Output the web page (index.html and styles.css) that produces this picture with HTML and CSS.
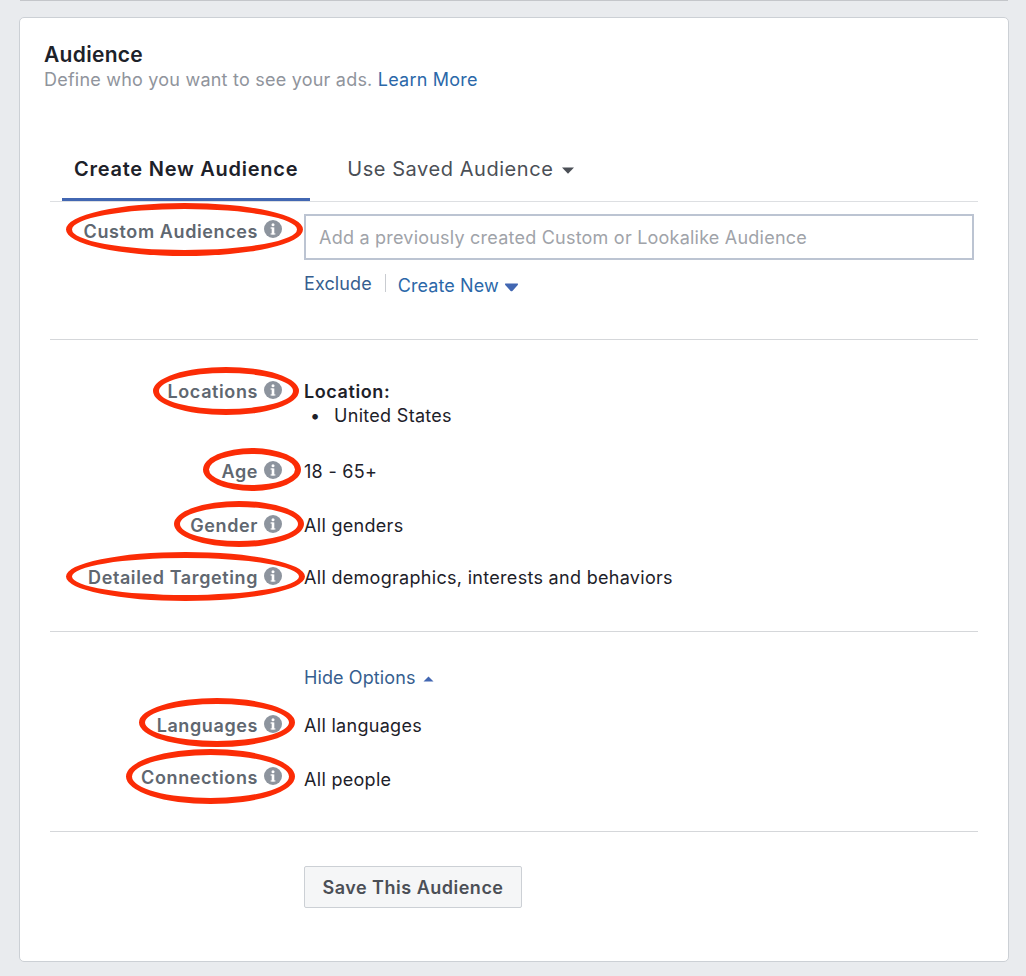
FILE: index.html
```html
<!DOCTYPE html>
<html lang="en">
<head>
<meta charset="utf-8">
<title>Audience</title>
<link rel="stylesheet" href="styles.css">
</head>
<body>
<svg class="defs" width="0" height="0" aria-hidden="true">
  <symbol id="info" viewBox="0 0 18 18">
    <circle cx="9" cy="9" r="9" fill="#8d949e"/>
    <circle cx="9" cy="4.8" r="1.5" fill="#fff"/>
    <rect x="7.7" y="7.4" width="2.6" height="7" fill="#fff"/>
    <rect x="6.6" y="7.4" width="2" height="1.2" fill="#fff"/>
    <rect x="6.6" y="13.4" width="4.8" height="1.1" fill="#fff"/>
  </symbol>
</svg>
<div class="prev-card"></div>
<main class="card">
  <h2 class="title">Audience</h2>
  <p class="subtitle">Define who you want to see your ads. <a class="link" href="#">Learn More</a></p>

  <div class="body">
    <nav class="tabs">
      <a class="tab tab-active" href="#">Create New Audience</a>
      <a class="tab" href="#">Use Saved Audience
        <svg class="caret-dark" width="12" height="7" viewBox="0 0 12 7"><path d="M0 .5h12L6 6.800z" fill="#4b4f56"/></svg>
      </a>
    </nav>

    <section class="section section-custom">
      <div class="row">
        <div class="label label-custom"><span class="ring ring-custom"></span>Custom Audiences <svg class="info"><use href="#info"/></svg></div>
        <div class="content">
          <div class="input">Add a previously created Custom or Lookalike Audience</div>
          <div class="actions">
            <a class="link-plain" href="#">Exclude</a>
            <span class="sep"></span>
            <a class="link create" href="#">Create New
              <svg width="15" height="9" viewBox="0 0 15 9"><path d="M1 1.2C1 .6 1.4.5 2 .5h11c.6 0 1 .1 1 .7 0 .5-.3.8-.7 1.200L8.400 7.900c-.5.5-1.300.5-1.800 0L1.700 2.400C1.300 2 1 1.700 1 1.200z" fill="#4267b2"/></svg>
            </a>
          </div>
        </div>
      </div>
    </section>

    <section class="section section-demo">
      <div class="row row-loc">
        <div class="label"><span class="ring ring-loc"></span>Locations <svg class="info"><use href="#info"/></svg></div>
        <div class="content">
          <strong class="strong">Location:</strong>
          <ul class="list"><li>United States</li></ul>
        </div>
      </div>
      <div class="row row-age">
        <div class="label"><span class="ring ring-age"></span>Age <svg class="info"><use href="#info"/></svg></div>
        <div class="content">18 - 65+</div>
      </div>
      <div class="row row-gender">
        <div class="label"><span class="ring ring-gender"></span>Gender <svg class="info"><use href="#info"/></svg></div>
        <div class="content">All genders</div>
      </div>
      <div class="row row-detail">
        <div class="label"><span class="ring ring-detail"></span>Detailed Targeting <svg class="info"><use href="#info"/></svg></div>
        <div class="content">All demographics, interests and behaviors</div>
      </div>
    </section>

    <section class="section section-more">
      <div class="row">
        <div class="label"></div>
        <div class="content"><a class="link-plain" href="#">Hide Options
          <svg class="caret-up" width="11" height="6" viewBox="0 0 11 6"><path d="M5.500.5l5 5H.5z" fill="#4267b2"/></svg></a></div>
      </div>
      <div class="row row-lang">
        <div class="label"><span class="ring ring-lang"></span>Languages <svg class="info"><use href="#info"/></svg></div>
        <div class="content">All languages</div>
      </div>
      <div class="row row-conn">
        <div class="label"><span class="ring ring-conn"></span>Connections <svg class="info"><use href="#info"/></svg></div>
        <div class="content">All people</div>
      </div>
    </section>

    <section class="section-save">
      <button class="button" type="button">Save This Audience</button>
    </section>
  </div>
</main>
</body>
</html>
```

FILE: styles.css
```css
* { box-sizing: border-box; }

html, body { margin: 0; padding: 0; }

body {
  width: 1026px;
  height: 976px;
  overflow: hidden;
  background: #e9ebee;
  color: #1d2129;
  font-family: Inter, "Liberation Sans", sans-serif;
  font-size: 18px;
  letter-spacing: .3px;
  line-height: 24px;
}

.defs { position: absolute; }

a { text-decoration: none; }

.prev-card {
  height: 1px;
  margin: 0 18px 0 20px;
  background: #c4c6ca;
}

.card {
  width: 990px;
  height: 945px;
  margin: 16px 0 0 19px;
  padding: 24px 0 0;
  background: #fff;
  border: 1px solid #ccd0d5;
  border-radius: 5px;
}

.title {
  margin: 0 0 0 24px;
  font-size: 21px;
  font-weight: 600;
  letter-spacing: .3px;
  line-height: 26px;
}

.subtitle {
  margin: 0 0 0 24px;
  color: #90949c;
  letter-spacing: .22px;
}

.link { color: #2b68a9; }
.link-plain { color: #365e8f; letter-spacing: .1px; }

.body { margin: 0 30px; }

.tabs {
  display: flex;
  gap: 25px;
  margin-top: 65px;
  padding-left: 12px;
  border-bottom: 1px solid #dddfe2;
}

.tab {
  display: block;
  padding: 0 12px 17px;
  border-bottom: 3px solid transparent;
  color: #4b4f56;
  font-size: 20px;
  letter-spacing: .55px;
}

.tab-active {
  border-bottom-color: #4267b2;
  color: #1d2129;
  font-weight: 600;
  letter-spacing: .75px;
}

.caret-dark { margin-left: 2px; vertical-align: 2px; }

.section { border-bottom: 1px solid #d5d7da; }

.section-custom { padding: 12px 0 41px; }
.section-demo { padding: 40px 0 41px; }
.section-more { padding: 34px 0 39px; }
.section-save { padding: 34px 0 0 254px; }

.row {
  display: grid;
  grid-template-columns: 232px 1fr;
  column-gap: 22px;
}

.row-age { margin-top: 32px; }
.row-gender { margin-top: 30px; }
.row-detail { margin-top: 28px; }
.row-lang { margin-top: 24px; }
.row-conn { margin-top: 30px; }

.label {
  position: relative;
  display: flex;
  justify-content: flex-end;
  align-items: flex-start;
  gap: 6px;
  color: #606770;
  font-weight: 600;
  letter-spacing: .6px;
  white-space: nowrap;
}

.label-custom { padding-top: 6px; }
.label-custom .info { margin-top: 0; }
.row-conn .label { margin-top: -2px; }

.info {
  flex: none;
  width: 18px;
  height: 18px;
  margin-top: 1px;
}

.ring {
  position: absolute;
  border: 6px solid #fb2c06;
  border-radius: 50%;
}

.ring-custom { left: 16px; top: -11px; width: 237px; height: 53px; }
.ring-loc    { left: 103px; top: -13px; width: 146px; height: 48px; }
.ring-age    { left: 153px; top: -12px; width: 98px; height: 43px; }
.ring-gender { left: 124px; top: -13px; width: 130px; height: 46px; }
.ring-detail { left: 16px; top: -14px; width: 239px; height: 49px; }
.ring-lang   { left: 89px; top: -16px; width: 156px; height: 49px; }
.ring-conn   { left: 76px; top: -17px; width: 169px; height: 55px; }

.input {
  width: 670px;
  height: 46px;
  padding: 10px 13px;
  border: 2px solid #bcc4d2;
  color: #a0a3a9;
  letter-spacing: .22px;
}

.actions {
  display: flex;
  align-items: flex-start;
  margin-top: 12px;
}

.sep {
  width: 1px;
  height: 18px;
  margin: 2px 12px 0 13px;
  background: #c9ccd1;
}

.create { margin-top: 2px; letter-spacing: .1px; }

.strong { font-weight: 600; letter-spacing: .6px; }

.list {
  margin: 0;
  padding: 0;
  list-style: none;
}

.list li { display: flex; }

.list li::before {
  content: "•";
  flex: none;
  box-sizing: border-box;
  width: 30px;
  padding-left: 6px;
}

.caret-up { margin-left: 2px; vertical-align: 2px; }

.button {
  display: block;
  width: 218px;
  height: 42px;
  padding: 0;
  background: #f5f6f7;
  border: 1px solid #ccd0d5;
  border-radius: 2px;
  color: #4b4f56;
  font-family: inherit;
  font-size: 18px;
  font-weight: 600;
  letter-spacing: .5px;
}
```
